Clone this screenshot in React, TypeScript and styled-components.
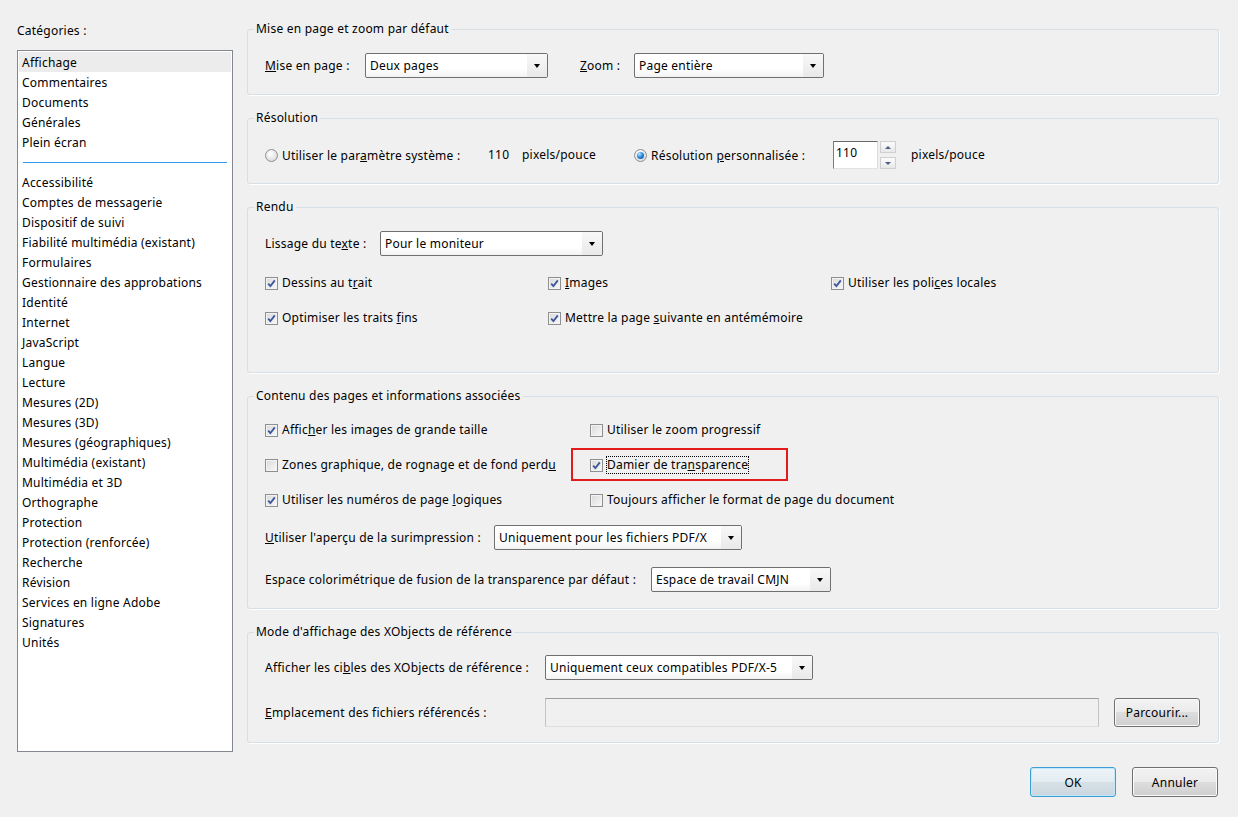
import React from "react";
import styled, { createGlobalStyle, css } from "styled-components";

const GlobalStyle = createGlobalStyle`
  html, body {
    margin: 0;
    padding: 0;
    background: #f0f0f0;
  }
  body {
    font-family: "Noto Sans", "Segoe UI", "Liberation Sans", sans-serif;
    font-size: 12px;
    letter-spacing: 0.22px;
    color: #000;
  }
`;

const Dialog = styled.div`
  width: 1238px;
  height: 817px;
  box-sizing: border-box;
  padding: 21px 19px 0 17px;
  display: flex;
  flex-direction: column;
`;

const Main = styled.div`
  display: flex;
  gap: 14px;
  align-items: flex-start;
`;

const Sidebar = styled.div`
  width: 216px;
  flex: none;
  display: flex;
  flex-direction: column;
  padding-top: 1px;
`;

const SideTitle = styled.div`
  line-height: 16px;
  padding-top: 1px;
  margin-bottom: 11px;
`;

const CategoryList = styled.div`
  height: 702px;
  box-sizing: border-box;
  border: 1px solid #828790;
  background: #fff;
  padding: 1px;
`;

const Category = styled.div<{ $selected?: boolean }>`
  height: 20px;
  box-sizing: border-box;
  padding: 1px 0 0 3px;
  line-height: 20px;
  white-space: nowrap;
  overflow: hidden;
  background: ${(p) => (p.$selected ? "#ececec" : "transparent")};
`;

const Separator = styled.div`
  height: 20px;
  display: flex;
  align-items: center;
  padding: 0 4px;

  &::before {
    content: "";
    flex: 1;
    height: 1px;
    background: #3399f3;
  }
`;

const Panels = styled.div`
  flex: 1;
  display: flex;
  flex-direction: column;
  gap: 15px;
`;

const Group = styled.fieldset<{ $pad: string }>`
  margin: 0;
  min-width: 0;
  border: 1px solid #d5dfe5;
  border-radius: 3px;
  box-shadow: 1px 1px 0 #ffffff;
  padding: ${(p) => p.$pad};
`;

const Title = styled.legend`
  padding: 0 2px;
  margin-left: -11px;
  line-height: 16px;
`;

const Row = styled.div<{ $mt?: number }>`
  display: flex;
  align-items: center;
  margin-top: ${(p) => p.$mt || 0}px;
`;

const Label = styled.span<{ $w?: number; $ml?: number }>`
  width: ${(p) => (p.$w ? `${p.$w}px` : "auto")};
  margin-left: ${(p) => p.$ml || 0}px;
  flex: none;
  white-space: nowrap;
  line-height: 16px;
`;

const U = styled.span`
  text-decoration: underline;
`;

const SelectBox = styled.div<{ $w: number }>`
  width: ${(p) => p.$w}px;
  height: 25px;
  flex: none;
  box-sizing: border-box;
  border: 1px solid #707070;
  border-radius: 2px;
  background: linear-gradient(#ffffff 65%, #f3f3f3);
  display: flex;
  align-items: center;
`;

const SelectValue = styled.span`
  flex: 1;
  padding-left: 4px;
  white-space: nowrap;
  line-height: 16px;
`;

const SelectArrow = styled.span`
  width: 20px;
  align-self: stretch;
  display: flex;
  align-items: center;
  justify-content: center;
  background: linear-gradient(#f8f8f8, #e9e9e9);
  border-radius: 0 1px 1px 0;

  &::after {
    content: "";
    border-left: 3.5px solid transparent;
    border-right: 3.5px solid transparent;
    border-top: 4px solid #000;
  }
`;

const CheckGrid = styled.div<{ $cols: string; $mt?: number }>`
  display: grid;
  grid-template-columns: ${(p) => p.$cols};
  row-gap: 15px;
  margin-top: ${(p) => p.$mt || 0}px;
`;

const CheckItem = styled.div<{ $highlight?: boolean }>`
  height: 20px;
  display: flex;
  align-items: center;
  gap: 3px;
  position: relative;

  ${(p) =>
    p.$highlight &&
    css`
      &::after {
        content: "";
        position: absolute;
        left: -19px;
        top: -7px;
        width: 217px;
        height: 33px;
        box-sizing: border-box;
        border: 2px solid #e31b1b;
        pointer-events: none;
      }
    `}
`;

const Box = styled.span`
  width: 13px;
  height: 13px;
  flex: none;
  box-sizing: border-box;
  border: 1px solid #8e8f8f;
  background: linear-gradient(135deg, #d9d9d9, #f9f9f9);
  box-shadow: inset 0 0 0 1px #f3f3f3;
  display: inline-flex;
  align-items: center;
  justify-content: center;
`;

const CheckText = styled.span<{ $focus?: boolean }>`
  border: 1px ${(p) => (p.$focus ? "dotted #000" : "solid transparent")};
  line-height: 16px;
  white-space: nowrap;
`;

const RadioItem = styled.div<{ $w: number }>`
  width: ${(p) => p.$w}px;
  flex: none;
  display: flex;
  align-items: center;
  gap: 4px;
  white-space: nowrap;
`;

const RadioDot = styled.span<{ $on?: boolean }>`
  width: 13px;
  height: 13px;
  flex: none;
  box-sizing: border-box;
  border-radius: 50%;
  border: 1px solid #8e8f8f;
  background: radial-gradient(circle at 40% 35%, #ffffff, #d2d2d2);
  display: inline-flex;
  align-items: center;
  justify-content: center;

  ${(p) =>
    p.$on &&
    css`
      &::after {
        content: "";
        width: 7px;
        height: 7px;
        border-radius: 50%;
        background: radial-gradient(circle at 35% 30%, #bfe8ff, #2b8fe0 45%, #0d3f7c);
      }
    `}
`;

const NumberBox = styled.div`
  width: 45px;
  height: 28px;
  flex: none;
  box-sizing: border-box;
  border: 1px solid;
  border-color: #6a6a6a #dcdcdc #e3e3e3 #7c7c7c;
  background: #fff;
  padding: 3px 2px;
  line-height: 16px;
`;

const Spinner = styled.div`
  width: 16px;
  height: 28px;
  margin-left: 2px;
  flex: none;
  display: flex;
  flex-direction: column;
  justify-content: space-between;
`;

const SpinBtn = styled.span<{ $down?: boolean }>`
  height: 12px;
  box-sizing: border-box;
  border: 1px solid #cfcfcf;
  background: linear-gradient(#fbfbfb, #e8e8e8);
  display: flex;
  align-items: center;
  justify-content: center;

  &::after {
    content: "";
    border-left: 3px solid transparent;
    border-right: 3px solid transparent;
    ${(p) =>
      p.$down
        ? "border-top: 3px solid #4d6185;"
        : "border-bottom: 3px solid #4d6185;"}
  }
`;

const PathBox = styled.div`
  width: 554px;
  height: 29px;
  flex: none;
  box-sizing: border-box;
  border: 1px solid;
  border-color: #9c9c9c #c4c4c4 #dedede #c4c4c4;
  background: #f0f0f0;
`;

const Button = styled.button<{ $default?: boolean; $h?: number; $ml?: number }>`
  width: 86px;
  height: ${(p) => p.$h || 30}px;
  margin-left: ${(p) => p.$ml || 0}px;
  flex: none;
  box-sizing: border-box;
  border: 1px solid #707070;
  border-radius: 3px;
  font: inherit;
  letter-spacing: inherit;
  color: #000;
  padding: 0;
  background: linear-gradient(#f2f2f2 0%, #ebebeb 49%, #dddddd 50%, #cfcfcf 100%);
  box-shadow: inset 0 0 0 1px #fbfbfb;

  ${(p) =>
    p.$default &&
    css`
      border-color: #3c9fd6;
      background: linear-gradient(#edf4f8 0%, #e3ecf2 49%, #d6e0e7 50%, #cbd7e0 100%);
      box-shadow: inset 0 0 0 1px #c3e6f9;
    `}
`;

const Footer = styled.div`
  display: flex;
  justify-content: flex-end;
  gap: 16px;
  margin-top: 15px;
  padding-right: 1px;
`;

const categories = [
  "Affichage",
  "Commentaires",
  "Documents",
  "Générales",
  "Plein écran",
  "-",
  "Accessibilité",
  "Comptes de messagerie",
  "Dispositif de suivi",
  "Fiabilité multimédia (existant)",
  "Formulaires",
  "Gestionnaire des approbations",
  "Identité",
  "Internet",
  "JavaScript",
  "Langue",
  "Lecture",
  "Mesures (2D)",
  "Mesures (3D)",
  "Mesures (géographiques)",
  "Multimédia (existant)",
  "Multimédia et 3D",
  "Orthographe",
  "Protection",
  "Protection (renforcée)",
  "Recherche",
  "Révision",
  "Services en ligne Adobe",
  "Signatures",
  "Unités",
];

function Select({ w, value }: { w: number; value: string }) {
  return (
    <SelectBox $w={w}>
      <SelectValue>{value}</SelectValue>
      <SelectArrow />
    </SelectBox>
  );
}

function Check({
  checked,
  focus,
  highlight,
  children,
}: {
  checked?: boolean;
  focus?: boolean;
  highlight?: boolean;
  children: React.ReactNode;
}) {
  return (
    <CheckItem $highlight={highlight}>
      <Box>
        {checked && (
          <svg width="11" height="11" viewBox="0 0 11 11">
            <path
              d="M2.2 5.6 L4.4 8 L8.8 2.4"
              fill="none"
              stroke="#3c559b"
              strokeWidth="1.8"
            />
          </svg>
        )}
      </Box>
      <CheckText $focus={focus}>{children}</CheckText>
    </CheckItem>
  );
}

export default function App() {
  return (
    <>
      <GlobalStyle />
      <Dialog>
        <Main>
          <Sidebar>
            <SideTitle>
              Caté<U>g</U>ories :
            </SideTitle>
            <CategoryList>
              {categories.map((c, i) =>
                c === "-" ? (
                  <Separator key={i} />
                ) : (
                  <Category key={i} $selected={i === 0}>
                    {c}
                  </Category>
                )
              )}
            </CategoryList>
          </Sidebar>

          <Panels>
            <Group $pad="16px 17px 16px">
              <Title>Mise en page et zoom par défaut</Title>
              <Row>
                <Label $w={100}>
                  <U>M</U>ise en page :
                </Label>
                <Select w={183} value="Deux pages" />
                <Label $w={54} $ml={32}>
                  <U>Z</U>oom :
                </Label>
                <Select w={190} value="Page entière" />
              </Row>
            </Group>

            <Group $pad="15px 17px 14px">
              <Title>Résolution</Title>
              <Row>
                <RadioItem $w={223}>
                  <RadioDot />
                  <span>
                    Utiliser le par<U>a</U>mètre système :
                  </span>
                </RadioItem>
                <Label $w={34}>110</Label>
                <Label $w={112}>pixels/pouce</Label>
                <RadioItem $w={199}>
                  <RadioDot $on />
                  <span>
                    Résolution <U>p</U>ersonnalisée :
                  </span>
                </RadioItem>
                <NumberBox>110</NumberBox>
                <Spinner>
                  <SpinBtn />
                  <SpinBtn $down />
                </Spinner>
                <Label $ml={15}>pixels/pouce</Label>
              </Row>
            </Group>

            <Group $pad="16px 17px 44px">
              <Title>Rendu</Title>
              <Row>
                <Label $w={115}>
                  Lissage du te<U>x</U>te :
                </Label>
                <Select w={223} value="Pour le moniteur" />
              </Row>
              <CheckGrid $cols="283px 283px 1fr" $mt={17}>
                <Check checked>
                  Dessins au t<U>r</U>ait
                </Check>
                <Check checked>
                  <U>I</U>mages
                </Check>
                <Check checked>
                  Utiliser les poli<U>c</U>es locales
                </Check>
                <Check checked>
                  Optimiser les traits <U>f</U>ins
                </Check>
                <Check checked>
                  Mettre la page <U>s</U>uivante en antémémoire
                </Check>
              </CheckGrid>
            </Group>

            <Group $pad="16px 17px 16px">
              <Title>Contenu des pages et informations associées</Title>
              <CheckGrid $cols="325px 1fr">
                <Check checked>
                  Affic<U>h</U>er les images de grande taille
                </Check>
                <Check>
                  Utiliser le zoom pro<U>g</U>ressif
                </Check>
                <Check>
                  Zones graphique, de rognage et de fond perd<U>u</U>
                </Check>
                <Check checked focus highlight>
                  Damier de tra<U>n</U>sparence
                </Check>
                <Check checked>
                  Utiliser les numéros de page <U>l</U>ogiques
                </Check>
                <Check>Toujours afficher le format de page du document</Check>
              </CheckGrid>
              <Row $mt={15}>
                <Label $w={229}>
                  <U>U</U>tiliser l'aperçu de la surimpression :
                </Label>
                <Select w={248} value="Uniquement pour les fichiers PDF/X" />
              </Row>
              <Row $mt={17}>
                <Label $w={386}>
                  Espace colorimétrique de fusion de la transparence par défaut :
                </Label>
                <Select w={180} value="Espace de travail CMJN" />
              </Row>
            </Group>

            <Group $pad="15px 18px 15px 17px">
              <Title>Mode d'affichage des XObjects de référence</Title>
              <Row>
                <Label $w={280}>
                  Afficher les ci<U>b</U>les des XObjects de référence :
                </Label>
                <Select w={268} value="Uniquement ceux compatibles PDF/X-5" />
              </Row>
              <Row $mt={18}>
                <Label $w={280}>
                  <U>E</U>mplacement des fichiers référencés :
                </Label>
                <PathBox />
                <Button $h={29} $ml={15}>
                  Parcourir...
                </Button>
              </Row>
            </Group>
          </Panels>
        </Main>

        <Footer>
          <Button $default>OK</Button>
          <Button>Annuler</Button>
        </Footer>
      </Dialog>
    </>
  );
}
